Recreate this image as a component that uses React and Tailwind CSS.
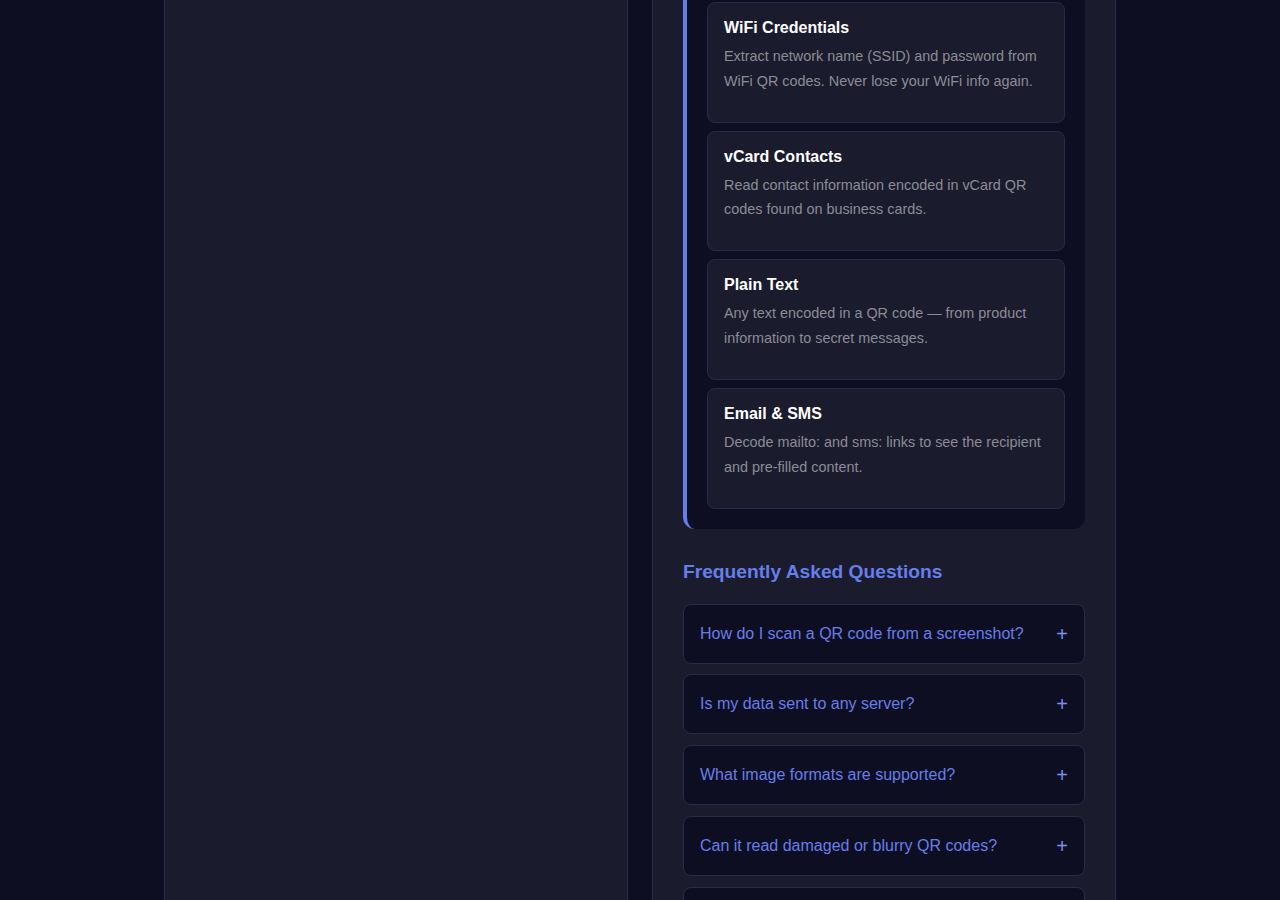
const features = [
  {
    title: "WiFi Credentials",
    desc: "Extract network name (SSID) and password from WiFi QR codes. Never lose your WiFi info again.",
  },
  {
    title: "vCard Contacts",
    desc: "Read contact information encoded in vCard QR codes found on business cards.",
  },
  {
    title: "Plain Text",
    desc: "Any text encoded in a QR code — from product information to secret messages.",
  },
  {
    title: "Email & SMS",
    desc: "Decode mailto: and sms: links to see the recipient and pre-filled content.",
  },
];

const faqs = [
  "How do I scan a QR code from a screenshot?",
  "Is my data sent to any server?",
  "What image formats are supported?",
  "Can it read damaged or blurry QR codes?",
  "Does it work on mobile devices?",
];

function FeatureCard({ title, desc }) {
  return (
    <div className="bg-[#1b1b2e] border border-[#2a2a48] rounded-lg px-4 pt-4 pb-[28.7px]">
      <h3 className="text-white font-bold text-base leading-[18px] mb-[7px]">{title}</h3>
      <p className="text-[#8c8c94] text-[14.4px] leading-[24.5px]">{desc}</p>
    </div>
  );
}

function FaqItem({ q }) {
  return (
    <div className="bg-[#0e0e22] border border-[#2a2a48] rounded-lg h-[60px] px-4 flex items-center justify-between">
      <span className="text-[#667eea] text-base">{q}</span>
      <span className="text-[#7b8ff0] text-xl leading-none">+</span>
    </div>
  );
}

export default function App() {
  return (
    <div
      className="h-[900px] overflow-hidden bg-[#0e0e22]"
      style={{ fontFamily: '"Liberation Sans", Arial, sans-serif' }}
    >
      <div className="w-[952px] mx-auto grid grid-cols-2 gap-6 h-[1000px]">
        <div className="bg-[#1b1b2e] border-x border-[#2c2c4a]"></div>
        <div className="bg-[#1b1b2e] border-x border-[#2c2c4a] px-[30px]">
          <div className="-mt-[18px] bg-[#0e0e22] border-l-4 border-[#667eea] rounded-xl p-5 flex flex-col gap-2">
            {features.map((f) => (
              <FeatureCard key={f.title} {...f} />
            ))}
          </div>
          <h2 className="text-[#667eea] font-bold text-[19.2px] leading-[22px] mt-8 mb-[21px]">
            Frequently Asked Questions
          </h2>
          <div className="flex flex-col gap-[10.7px]">
            {faqs.map((q) => (
              <FaqItem key={q} q={q} />
            ))}
          </div>
        </div>
      </div>
    </div>
  );
}
